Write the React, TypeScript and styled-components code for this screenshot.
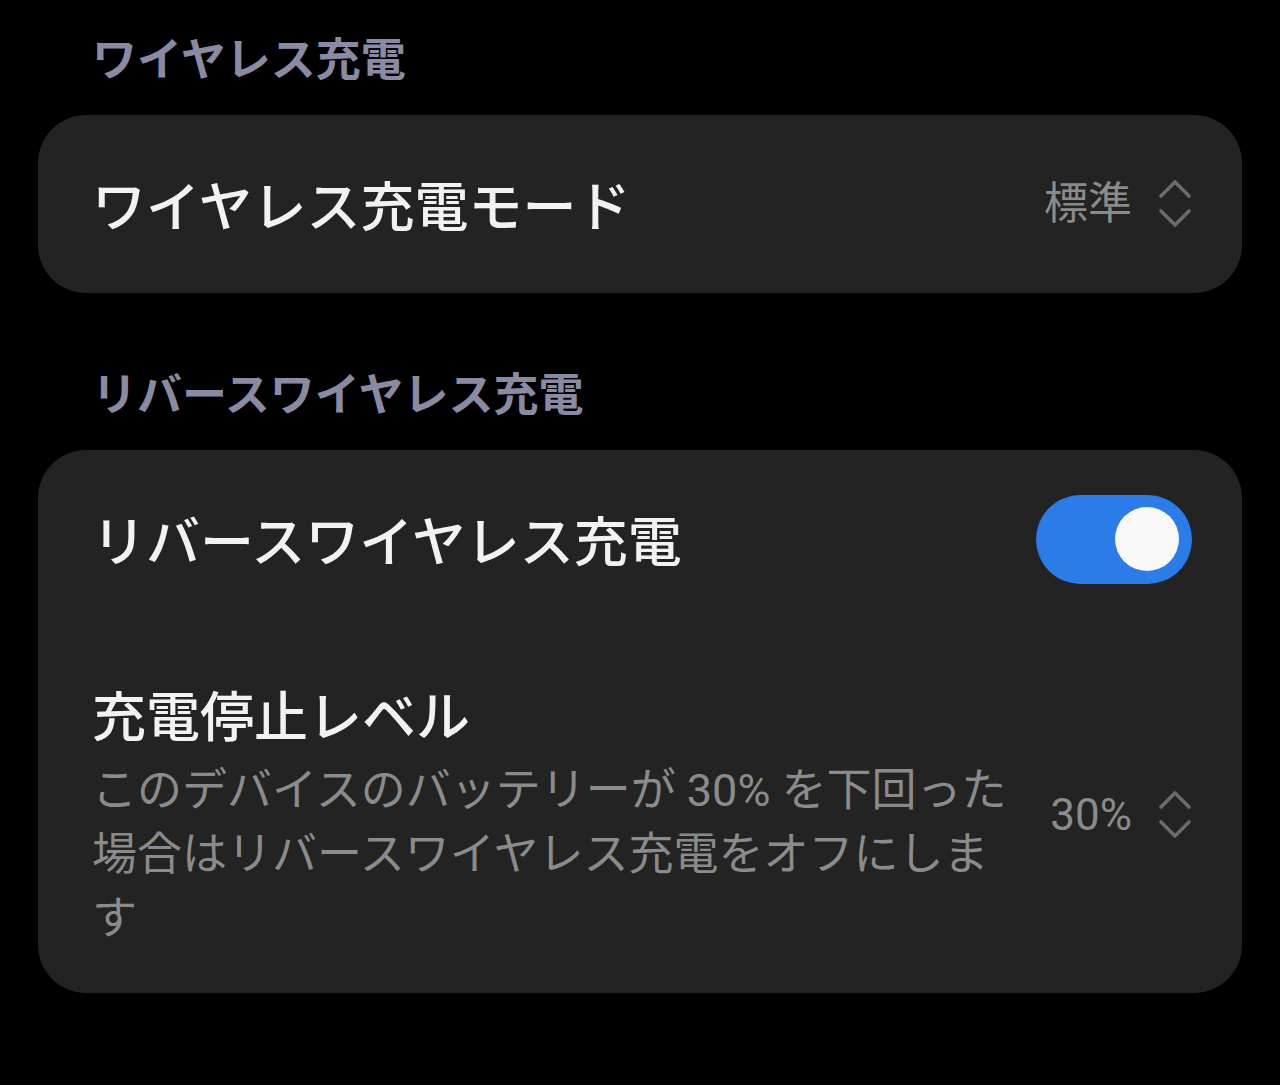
import React from "react";
import styled, { createGlobalStyle } from "styled-components";

const Global = createGlobalStyle`
  html, body { margin: 0; padding: 0; background: #000; }
  body { font-family: Roboto, "Noto Sans CJK JP", "Noto Sans", sans-serif; -webkit-font-smoothing: antialiased; }
`;

const Page = styled.div`
  width: 1280px;
  min-height: 1085px;
  box-sizing: border-box;
  padding: 31px 38px 0;
  background: #000;
`;

const SectionHeader = styled.div<{ $first?: boolean }>`
  padding-left: 54px;
  margin-top: ${(p) => (p.$first ? "0" : "73px")};
  margin-bottom: 24px;
  font-size: 45px;
  line-height: 60px;
  font-weight: 700;
  color: #8a8ba3;
`;

const Card = styled.div`
  background: #232323;
  border-radius: 48px;
  padding: 0 50px 0 54px;
  display: flex;
  flex-direction: column;
`;

const Row = styled.div<{ $height?: number; $pt?: number; $pb?: number }>`
  display: flex;
  align-items: center;
  justify-content: space-between;
  gap: 40px;
  min-height: ${(p) => (p.$height ? `${p.$height}px` : "auto")};
  padding-top: ${(p) => p.$pt ?? 0}px;
  padding-bottom: ${(p) => p.$pb ?? 0}px;
  box-sizing: border-box;
`;

const TextCol = styled.div<{ $offset?: number }>`
  flex: 1;
  min-width: 0;
  display: flex;
  flex-direction: column;
  padding-top: ${(p) => p.$offset ?? 0}px;
`;

const Title = styled.div`
  font-size: 54px;
  line-height: 70px;
  font-weight: 500;
  color: #f2f2f2;
`;

const Description = styled.div`
  margin-top: 5px;
  font-size: 45px;
  line-height: 64px;
  color: #8b8b8b;
`;

const ValueGroup = styled.div<{ $shift?: number }>`
  display: flex;
  align-items: center;
  gap: 26px;
  flex-shrink: 0;
  margin-top: ${(p) => p.$shift ?? 0}px;
`;

const Value = styled.span`
  font-size: 44px;
  line-height: 60px;
  color: #8b8b8b;
`;

const Toggle = styled.div<{ $on: boolean }>`
  width: 156px;
  height: 89px;
  border-radius: 45px;
  background: ${(p) => (p.$on ? "#2b7be9" : "#555")};
  display: flex;
  align-items: center;
  justify-content: ${(p) => (p.$on ? "flex-end" : "flex-start")};
  padding: 0 13px;
  box-sizing: border-box;
  flex-shrink: 0;
`;

const Knob = styled.div`
  width: 64px;
  height: 64px;
  border-radius: 50%;
  background: #f8f8f8;
`;

const Chevrons = () => (
  <svg width="34" height="50" viewBox="0 0 34 50" fill="none">
    <polyline points="3,17 17,3 31,17" stroke="#6b6b6b" strokeWidth="3.6" strokeLinecap="round" strokeLinejoin="round" />
    <polyline points="3,32 17,46 31,32" stroke="#6b6b6b" strokeWidth="3.6" strokeLinecap="round" strokeLinejoin="round" />
  </svg>
);

export default function App() {
  return (
    <>
      <Global />
      <Page>
        <SectionHeader $first>ワイヤレス充電</SectionHeader>
        <Card>
          <Row $height={178}>
            <TextCol $offset={9}>
              <Title>ワイヤレス充電モード</Title>
            </TextCol>
            <ValueGroup>
              <Value>標準</Value>
              <Chevrons />
            </ValueGroup>
          </Row>
        </Card>

        <SectionHeader>リバースワイヤレス充電</SectionHeader>
        <Card>
          <Row $height={178}>
            <TextCol $offset={9}>
              <Title>リバースワイヤレス充電</Title>
            </TextCol>
            <Toggle $on>
              <Knob />
            </Toggle>
          </Row>
          <Row $pt={56} $pb={42}>
            <TextCol>
              <Title>充電停止レベル</Title>
              <Description>
                このデバイスのバッテリーが 30% を下回った場合はリバースワイヤレス充電をオフにします
              </Description>
            </TextCol>
            <ValueGroup $shift={-6}>
              <Value>30%</Value>
              <Chevrons />
            </ValueGroup>
          </Row>
        </Card>
      </Page>
    </>
  );
}
